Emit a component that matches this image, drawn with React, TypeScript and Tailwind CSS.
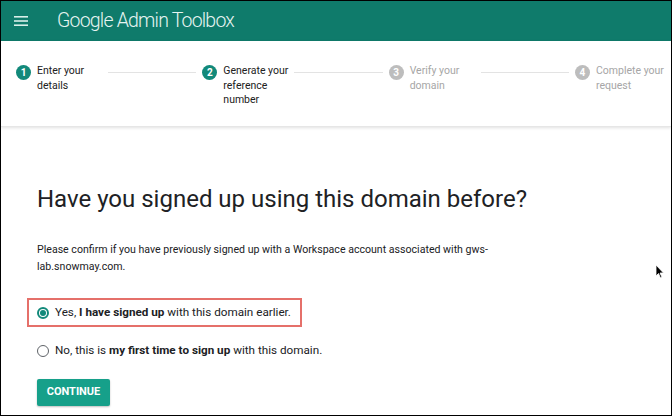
import React from "react";

const Step = ({ n, lines, active }: { n: number; lines: string[]; active: boolean }) => (
  <div className="flex items-start gap-[6px] shrink-0 w-[86px]">
    <div
      className={
        "w-[15px] h-[15px] shrink-0 rounded-full flex items-center justify-center text-[10px] font-bold text-white mt-[1px] " +
        (active ? "bg-[#12897a]" : "bg-[#bdbdbd]")
      }
    >
      {n}
    </div>
    <div className={"text-[10.5px] leading-[14.5px] whitespace-nowrap " + (active ? "text-[#212121]" : "text-[#a6a6a6]")}>
      {lines.map((l, i) => (
        <div key={i}>{l}</div>
      ))}
    </div>
  </div>
);

const Line = () => <div className="flex-1 h-px bg-[#e3e3e3] mt-[8px] mx-[6px]" />;

export default function App() {
  return (
    <div
      className="relative w-[672px] h-[416px] border border-black overflow-hidden bg-white"
      style={{ fontFamily: "Roboto, 'Liberation Sans', sans-serif" }}
    >
      <div className="h-[40px] bg-[#0f7b6b] flex items-center">
        <svg width="14" height="12" viewBox="0 0 14 12" className="ml-[13px]">
          <rect x="0" y="1" width="14" height="1.6" fill="#d8efe9" />
          <rect x="0" y="5.2" width="14" height="1.6" fill="#d8efe9" />
          <rect x="0" y="9.4" width="14" height="1.6" fill="#d8efe9" />
        </svg>
        <div className="ml-[29px] text-[19.5px] font-light text-[#e6f4f1] tracking-[-0.8px]">
          Google Admin Toolbox
        </div>
      </div>
      <div className="h-[86px] flex items-start pl-[15px] pr-[10px] pt-[23px] border-b border-[#e6e6e6] shadow-[0_1px_3px_rgba(0,0,0,0.12)]">
        <Step n={1} lines={["Enter your", "details"]} active />
        <Line />
        <Step n={2} lines={["Generate your", "reference", "number"]} active />
        <Line />
        <Step n={3} lines={["Verify your", "domain"]} active={false} />
        <Line />
        <Step n={4} lines={["Complete your", "request"]} active={false} />
      </div>
      <div className="pl-[36px] pr-[30px]">
        <h1 className="mt-[55px] text-[24px] leading-[34px] text-[#202124]">
          Have you signed up using this domain before?
        </h1>
        <p className="mt-[26px] text-[10.6px] leading-[16.5px] text-[#202124]">
          Please confirm if you have previously signed up with a Workspace account associated with gws-
          <br />
          lab.snowmay.com.
        </p>
        <div className="mt-[23px] -ml-[10px] w-[275px] h-[29px] border-2 border-[#e5706a] flex items-center pl-[8px] gap-[6px] text-[11.7px] text-[#202124]">
          <div className="w-[12px] h-[12px] rounded-full border-2 border-[#12897a] flex items-center justify-center">
            <div className="w-[6px] h-[6px] rounded-full bg-[#12897a]" />
          </div>
          <span>
            Yes, <b className="font-bold">I have signed up</b> with this domain earlier.
          </span>
        </div>
        <div className="mt-[15px] flex items-center gap-[6px] text-[11.7px] text-[#202124]">
          <div className="w-[12px] h-[12px] rounded-full border-[1.5px] border-[#5f6368]" />
          <span>
            No, this is <b className="font-bold">my first time to sign up</b> with this domain.
          </span>
        </div>
        <button className="mt-[19px] w-[73px] h-[27px] bg-[#16a08a] rounded-[2px] text-white text-[11px] font-bold shadow-[0_1px_2px_rgba(0,0,0,0.25)]">
          CONTINUE
        </button>
      </div>
      <svg width="10" height="16" viewBox="0 0 10 16" className="absolute left-[654px] top-[263px]">
        <path d="M1 1 L1 12 L3.5 9.5 L5.5 14 L7 13.3 L5 9 L8.5 9 Z" fill="#000" stroke="#fff" strokeWidth="0.8" />
      </svg>
    </div>
  );
}
